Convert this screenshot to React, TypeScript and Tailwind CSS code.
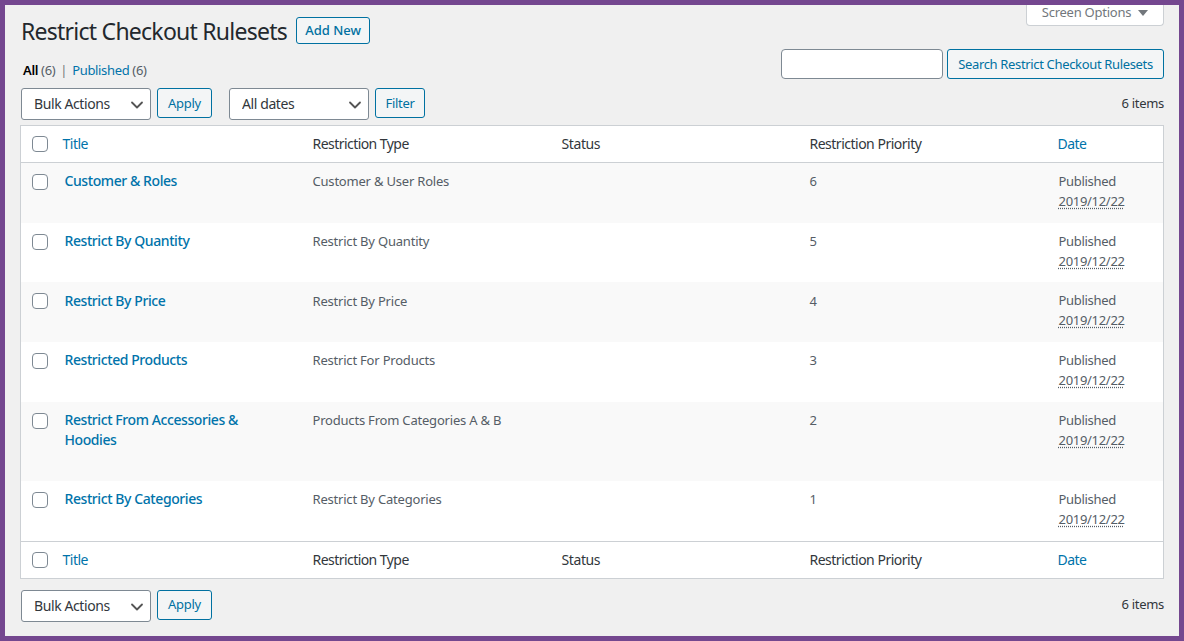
import { ChevronDown } from "lucide-react";

const rows = [
  { title: ["Customer & Roles"], type: "Customer & User Roles", priority: 6, h: "h-[60px]", bg: "bg-[#f9f9f9]", pt: "pt-2" },
  { title: ["Restrict By Quantity"], type: "Restrict By Quantity", priority: 5, h: "h-[59px]", bg: "bg-white", pt: "pt-2" },
  { title: ["Restrict By Price"], type: "Restrict By Price", priority: 4, h: "h-[60px]", bg: "bg-[#f9f9f9]", pt: "pt-[9px]" },
  { title: ["Restricted Products"], type: "Restrict For Products", priority: 3, h: "h-[60px]", bg: "bg-white", pt: "pt-2" },
  {
    title: ["Restrict From Accessories &", "Hoodies"],
    type: "Products From Categories A & B",
    priority: 2,
    h: "h-[79px]",
    bg: "bg-[#f9f9f9]",
    pt: "pt-2",
  },
  { title: ["Restrict By Categories"], type: "Restrict By Categories", priority: 1, h: "h-[61px]", bg: "bg-white", pt: "pt-2" },
];

const Checkbox = () => (
  <input
    type="checkbox"
    className="block h-4 w-4 appearance-none rounded-[4px] border border-[#7e8993] bg-white"
  />
);

const Select = ({ label, width }: { label: string; width: string }) => (
  <div className={`relative h-8 ${width}`}>
    <select className="h-8 w-full appearance-none rounded-[3px] border border-[#7e8993] bg-white pb-[2px] pl-3 text-[14px] tracking-[-0.4px] text-[#32373c]">
      <option>{label}</option>
    </select>
    <ChevronDown
      className="pointer-events-none absolute top-[7px] right-[4px] h-5 w-5 text-[#555]"
      strokeWidth={2.2}
    />
  </div>
);

const SecondaryButton = ({ children, className }: { children: string; className: string }) => (
  <button
    type="button"
    className={`rounded-[3px] border border-[#0071a1] bg-[#f3f5f6] text-[13px] text-[#0071a1] ${className}`}
  >
    {children}
  </button>
);

const HeadRow = ({ top }: { top?: boolean }) => (
  <tr className={`h-[37px] bg-white ${top ? "border-b" : "border-t"} border-[#ccd0d4]`}>
    <td className="pl-[11px] align-middle">
      <Checkbox />
    </td>
    <th className="px-2 pb-[2px] text-left text-[14px] font-normal tracking-[-0.5px] text-[#0073aa]">Title</th>
    <th className="px-2 pb-[2px] text-left text-[14px] font-normal tracking-[-0.55px] text-[#32373c]">Restriction Type</th>
    <th className="px-2 pb-[2px] text-left text-[14px] font-normal tracking-[-0.4px] text-[#32373c]">Status</th>
    <th className="px-2 pb-[2px] text-left text-[14px] font-normal tracking-[-0.5px] text-[#32373c]">Restriction Priority</th>
    <th className="px-2 pb-[2px] text-left text-[14px] font-normal tracking-[-0.55px] text-[#0073aa]">Date</th>
  </tr>
);

export default function App() {
  return (
    <div
      className="h-[641px] w-[1184px] overflow-hidden border-[5px] border-[#74478f] bg-[#f0f0f0] px-[15px]"
      style={{ fontFamily: '"Noto Sans", sans-serif' }}
    >
      <div className="flex justify-end">
        <div className="flex h-[21px] w-[138px] items-center justify-center gap-[7px] rounded-b-[4px] border border-t-0 border-[#ccd0d4] bg-white pb-[5px] text-[13px] tracking-[-0.25px] text-[#72777c]">
          Screen Options
          <span className="h-0 w-0 border-x-[5px] border-t-[6px] border-x-transparent border-t-[#72777c]" />
        </div>
      </div>

      <div className="-mt-[9px] flex justify-between">
        <div className="pl-px">
          <div className="flex h-[27px] items-center gap-[9px]">
            <h1 className="mt-[2px] text-[23px] leading-[27px] font-normal tracking-[-0.75px] text-[#23282d]">
              Restrict Checkout Rulesets
            </h1>
            <SecondaryButton className="h-[27px] w-[74px] font-medium">Add New</SecondaryButton>
          </div>
          <div className="mt-[16px] pl-[2px] text-[13px] leading-5 tracking-[-0.34px] text-[#555d66]">
            <span className="font-semibold text-black">All</span> (6)
            <span className="mx-[5px] text-[#72777c]">|</span>
            <span className="text-[#0073aa]">Published</span> (6)
          </div>
        </div>
        <div className="flex gap-1 pt-[32px]">
          <input className="h-[30px] w-[162px] rounded-[4px] border border-[#7e8993] bg-white" />
          <SecondaryButton className="h-[30px] w-[217px] pt-px tracking-[-0.34px]">
            Search Restrict Checkout Rulesets
          </SecondaryButton>
        </div>
      </div>

      <div className="mt-[8px] flex h-[37px] items-start pl-px">
        <Select label="Bulk Actions" width="w-[130px]" />
        <SecondaryButton className="ml-[6px] h-[30px] w-[55px] pt-[2px] tracking-[-0.3px]">Apply</SecondaryButton>
        <div className="ml-[17px]">
          <Select label="All dates" width="w-[140px]" />
        </div>
        <SecondaryButton className="ml-[6px] h-[30px] w-[50px] pt-[2px] tracking-[-0.3px]">Filter</SecondaryButton>
        <span className="ml-auto pt-[5px] text-[13px] leading-5 tracking-[-0.3px] text-[#32373c]">6 items</span>
      </div>

      <table className="w-[1144px] table-fixed border-collapse border border-[#ccd0d4] bg-white">
        <colgroup>
          <col className="w-[34px]" />
          <col className="w-[250px]" />
          <col className="w-[249px]" />
          <col className="w-[248px]" />
          <col className="w-[248px]" />
          <col />
        </colgroup>
        <thead>
          <HeadRow top />
        </thead>
        <tbody>
          {rows.map((row) => (
            <tr key={row.type} className={`${row.h} ${row.bg} align-top`}>
              <td className="pt-[11px] pl-[11px]">
                <Checkbox />
              </td>
              <td className={`px-[10px] text-[14px] leading-5 font-medium tracking-[-0.42px] text-[#0073aa] ${row.pt}`}>
                {row.title.map((line) => (
                  <div key={line}>{line}</div>
                ))}
              </td>
              <td className={`px-2 text-[13px] leading-5 tracking-[-0.2px] text-[#555d66] ${row.pt}`}>{row.type}</td>
              <td />
              <td className={`px-2 text-[13px] leading-5 text-[#555d66] ${row.pt}`}>{row.priority}</td>
              <td className="px-[9px] pt-2 text-[13px] leading-5 tracking-[-0.3px] text-[#555d66]">
                <div>Published</div>
                <abbr className="underline decoration-dotted underline-offset-2">2019/12/22</abbr>
              </td>
            </tr>
          ))}
        </tbody>
        <tfoot>
          <HeadRow />
        </tfoot>
      </table>

      <div className="mt-[11px] flex items-start pl-px">
        <Select label="Bulk Actions" width="w-[130px]" />
        <SecondaryButton className="ml-[6px] h-[30px] w-[55px] tracking-[-0.3px]">Apply</SecondaryButton>
        <span className="ml-auto pt-[4px] text-[13px] leading-5 tracking-[-0.3px] text-[#32373c]">6 items</span>
      </div>
    </div>
  );
}
